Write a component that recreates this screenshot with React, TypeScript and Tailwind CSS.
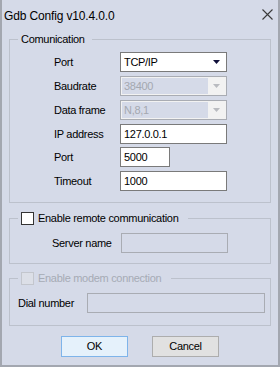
import React from 'react';

const font = "font-['Liberation_Sans',Arial,sans-serif]";

function ComboArrow({ disabled }: { disabled?: boolean }) {
  return (
    <svg width="7" height="4" viewBox="0 0 7 4" className="shrink-0">
      <path d="M0 0H7L3.5 4Z" fill={disabled ? '#b9bbc0' : '#10103a'} />
    </svg>
  );
}

function Combo({ value, disabled, width = 'w-[107px]' }: { value: string; disabled?: boolean; width?: string }) {
  if (disabled) {
    return (
      <div className={`${width} h-[20px] border border-[#a9acb3] bg-[#f2f2f2] p-px flex`}>
        <div className="flex-1 bg-[#d5dae8] flex items-center pl-[2px] text-[#a4a8b0]">{value}</div>
        <div className="w-[17px] flex items-center justify-center">
          <ComboArrow disabled />
        </div>
      </div>
    );
  }
  return (
    <div className={`${width} h-[20px] border border-[#7a7a7a] bg-white flex items-center justify-between pl-[3px] pr-[6px]`}>
      <span>{value}</span>
      <ComboArrow />
    </div>
  );
}

function TextBox({ value = '', disabled, width }: { value?: string; disabled?: boolean; width: string }) {
  return (
    <div
      className={`${width} h-[20px] border flex items-center pl-[3px] ${
        disabled ? 'border-[#a9acb3] bg-[#d5dae8]' : 'border-[#7a7a7a] bg-white'
      }`}
    >
      {value}
    </div>
  );
}

function CheckBox({ disabled }: { disabled?: boolean }) {
  return (
    <span
      className={`inline-block w-[13px] h-[13px] border shrink-0 ${
        disabled ? 'border-[#c3c6cd] bg-[#dcdfe7]' : 'border-[#333333] bg-white'
      }`}
    />
  );
}

function Row({ label, children }: { label: string; children: React.ReactNode }) {
  return (
    <div className="flex items-center h-[20px]">
      <span className="w-[66px]">{label}</span>
      {children}
    </div>
  );
}

export default function App() {
  return (
    <div className={`w-[280px] h-[367px] bg-[#d5dae8] border-x-2 border-b-2 border-[#a3a7b0] text-[11px] tracking-[-0.3px] text-black ${font} flex flex-col`}>
      {/* title bar */}
      <div className="h-[31px] flex items-center justify-between pl-[2px] pr-[5px] shrink-0">
        <span className="text-[12px] tracking-[-0.15px]">Gdb Config v10.4.0.0</span>
        <svg width="11" height="11" viewBox="0 0 11 11" className="mb-[2px]">
          <path d="M0.5 0.5L10.5 10.5M10.5 0.5L0.5 10.5" stroke="#3a3a3a" strokeWidth="1.1" />
        </svg>
      </div>

      <div className="px-[7px] flex flex-col">
        {/* Comunication */}
        <fieldset className="mt-[1px] border border-[#bcc1cc]">
          <legend className="ml-[8px] pl-[3px] pr-[7px] leading-[14px]">Comunication</legend>
          <div className="flex flex-col gap-[4px] pt-[6px] pb-[11px] pl-[44px]">
            <Row label="Port">
              <Combo value="TCP/IP" />
            </Row>
            <Row label="Baudrate">
              <Combo value="38400" disabled />
            </Row>
            <Row label="Data frame">
              <Combo value="N,8,1" disabled />
            </Row>
            <Row label="IP address">
              <TextBox value="127.0.0.1" width="w-[107px]" />
            </Row>
            <div className="-mt-px">
              <Row label="Port">
                <TextBox value="5000" width="w-[50px]" />
              </Row>
            </div>
            <Row label="Timeout">
              <TextBox value="1000" width="w-[107px]" />
            </Row>
          </div>
        </fieldset>

        {/* remote */}
        <fieldset className="mt-[8px] border border-[#bcc1cc]">
          <legend className="ml-[8px] pl-[3px] pr-[10px] leading-[14px] flex items-center gap-[4px]">
            <CheckBox />
            <span>Enable remote communication</span>
          </legend>
          <div className="flex items-center h-[20px] mt-[8px] mb-[10px] pl-[42px]">
            <span className="w-[69px]">Server name</span>
            <TextBox disabled width="w-[107px]" />
          </div>
        </fieldset>

        {/* modem */}
        <fieldset className="mt-[7px] border border-[#bcc1cc]">
          <legend className="ml-[8px] pl-[3px] pr-[10px] leading-[14px] flex items-center gap-[4px] text-[#a6abb5]">
            <CheckBox disabled />
            <span>Enable modem connection</span>
          </legend>
          <div className="flex items-center h-[20px] mt-[8px] mb-[12px] pl-[8px]">
            <span className="w-[69px]">Dial number</span>
            <TextBox disabled width="w-[178px]" />
          </div>
        </fieldset>

        {/* buttons */}
        <div className="mt-[10px] flex justify-center gap-[24px]">
          <button className="w-[67px] h-[21px] border border-[#7eb4ea] bg-[#e5f1fb] flex items-center justify-center">
            OK
          </button>
          <button className="w-[67px] h-[21px] border border-[#adadad] bg-[#e1e1e1] flex items-center justify-center">
            Cancel
          </button>
        </div>
      </div>
    </div>
  );
}
